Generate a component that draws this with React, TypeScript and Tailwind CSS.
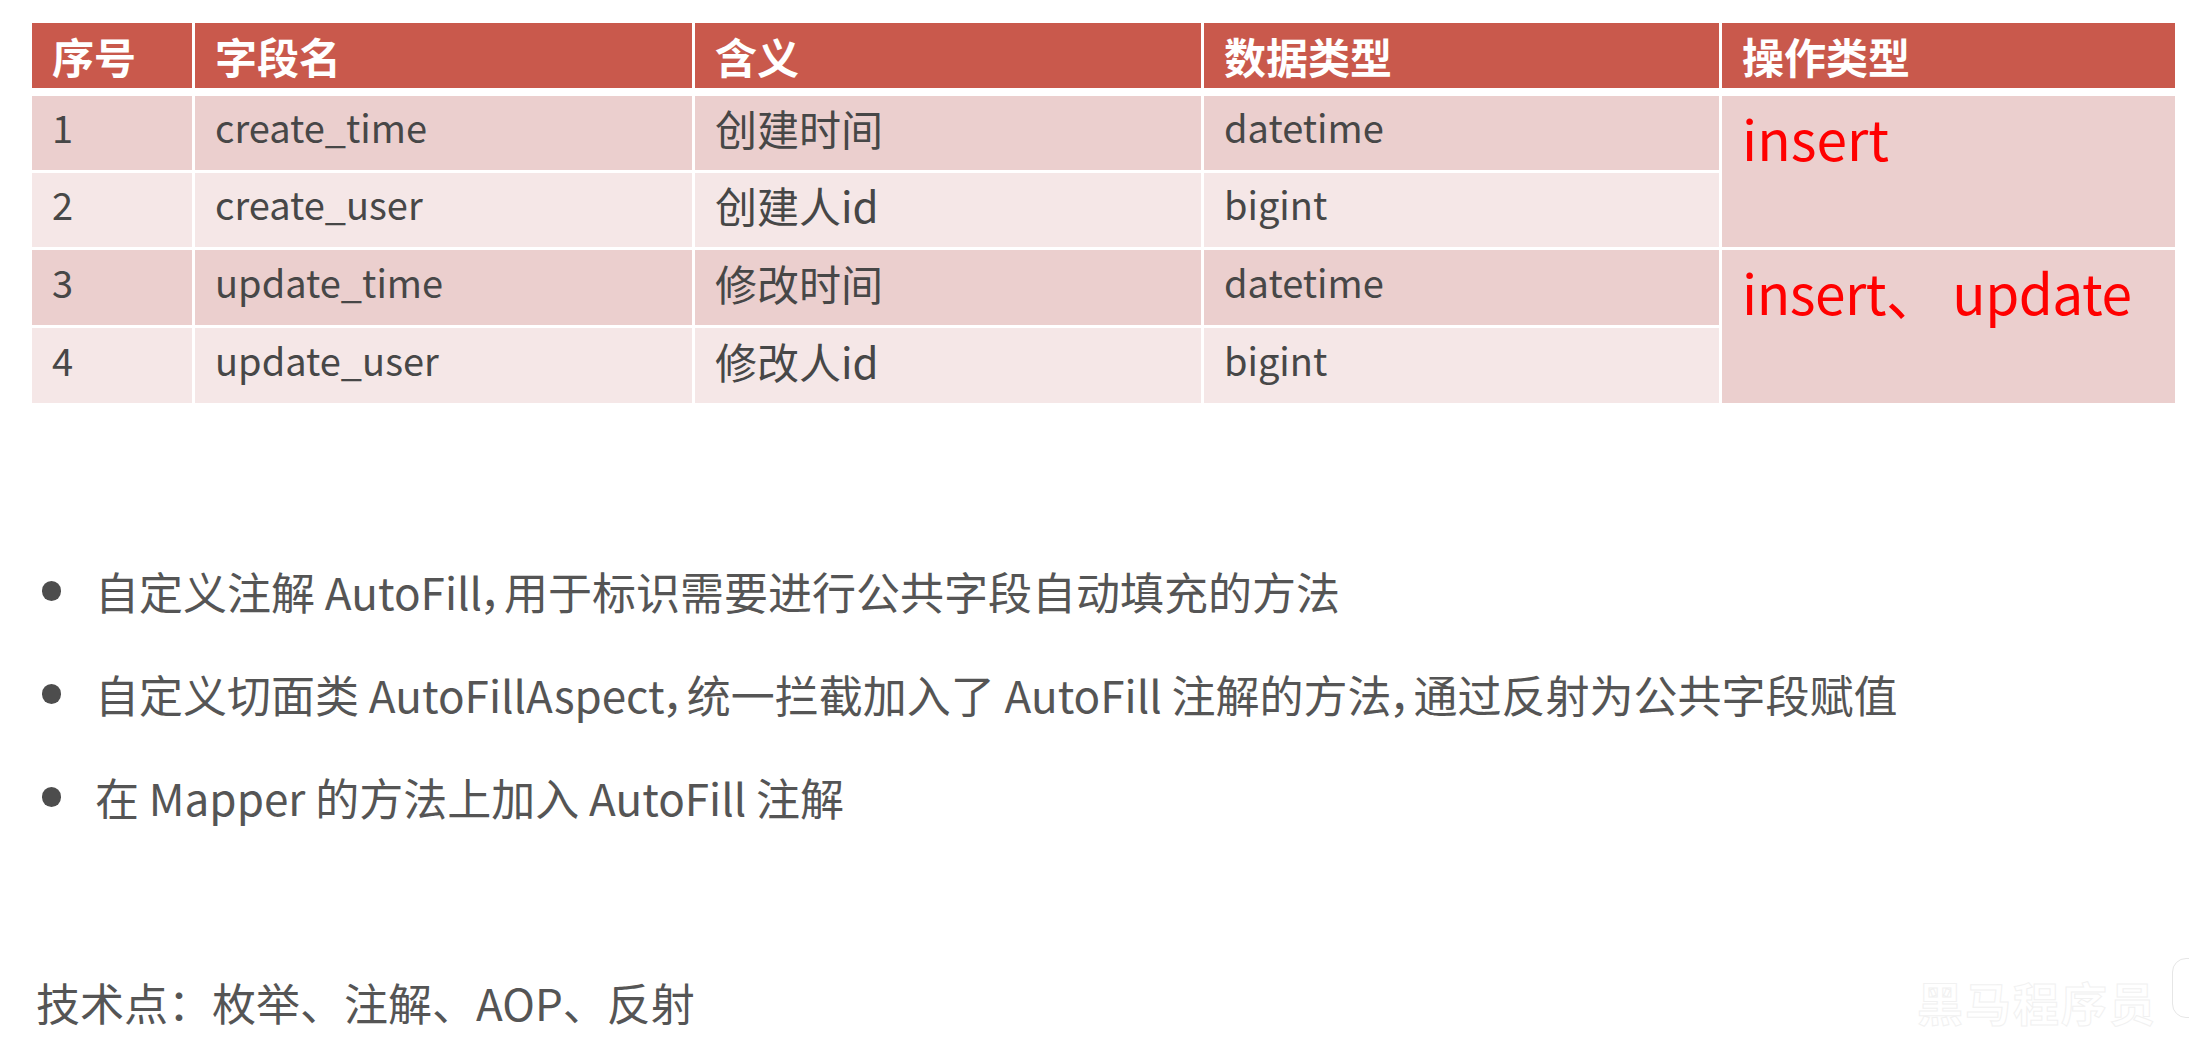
import React from 'react';

interface FieldRow {
  no: string;
  name: string;
  meaning: string;
  type: string;
}

const rows: FieldRow[] = [
  { no: '1', name: 'create_time', meaning: '创建时间', type: 'datetime' },
  { no: '2', name: 'create_user', meaning: '创建人id', type: 'bigint' },
  { no: '3', name: 'update_time', meaning: '修改时间', type: 'datetime' },
  { no: '4', name: 'update_user', meaning: '修改人id', type: 'bigint' },
];

const headers = ['序号', '字段名', '含义', '数据类型', '操作类型'];

const bullets = [
  '自定义注解 AutoFill，用于标识需要进行公共字段自动填充的方法',
  '自定义切面类 AutoFillAspect，统一拦截加入了 AutoFill 注解的方法，通过反射为公共字段赋值',
  '在 Mapper 的方法上加入 AutoFill 注解',
];

const App: React.FC = () => {
  return (
    <div className="relative w-[2189px] h-[1040px] overflow-hidden bg-white font-['Noto_Sans_CJK_SC',sans-serif]">
      {/* Table */}
      <div className="ml-[32px] mt-[23px] w-[2143px]">
        {/* Header */}
        <div className="grid grid-cols-[160px_497px_506px_515px_453px] gap-x-[3px] h-[65px]">
          {headers.map((h) => (
            <div key={h} className="bg-[#c9594c] flex items-center pl-[20px] text-white font-bold text-[42px] leading-none">
              {h}
            </div>
          ))}
        </div>

        {/* Body */}
        <div className="mt-[8px] grid grid-cols-[160px_497px_506px_515px_453px] grid-rows-[74px_74px_75px_75px] gap-x-[3px] gap-y-[3px]">
          {rows.map((r, i) => {
            const bg = i % 2 === 0 ? 'bg-[#ebcfce]' : 'bg-[#f5e7e7]';
            const cell = `${bg} flex items-center pl-[20px] leading-none text-[#474747]`;
            return (
              <React.Fragment key={r.no}>
                <div className={`${cell} text-[38px] pb-[12px]`} style={{ gridRow: i + 1, gridColumn: 1 }}>{r.no}</div>
                <div className={`${cell} text-[38px] pb-[12px]`} style={{ gridRow: i + 1, gridColumn: 2 }}>{r.name}</div>
                <div className={`${cell} text-[42px] pb-[10px]`} style={{ gridRow: i + 1, gridColumn: 3 }}>{r.meaning}</div>
                <div className={`${cell} text-[38px] pb-[12px]`} style={{ gridRow: i + 1, gridColumn: 4 }}>{r.type}</div>
              </React.Fragment>
            );
          })}
          <div className="col-start-5 row-start-1 row-span-2 bg-[#ebcfce] pl-[20px] pt-[14px] text-[55px] leading-none text-[#ff0000]">
            insert
          </div>
          <div className="col-start-5 row-start-3 row-span-2 bg-[#ebcfce] pl-[20px] pt-[14px] text-[55px] leading-none text-[#ff0000] whitespace-nowrap tracking-[-0.5px]">
            insert、 update
          </div>
        </div>
      </div>

      {/* Bullet points */}
      <ul className="mt-[166px] ml-[42px] flex flex-col gap-[59px] [font-feature-settings:'palt']">
        {bullets.map((b) => (
          <li key={b} className="flex items-center text-[44px] leading-none text-[#555555]">
            <span className="w-[19px] h-[20px] rounded-full bg-[#4d4d4d] mr-[34px] shrink-0" />
            <span>{b}</span>
          </li>
        ))}
      </ul>

      {/* Tech points */}
      <p className="mt-[161px] ml-[36px] text-[44px] leading-none text-[#555555]">
        技术点：枚举、注解、AOP、反射
      </p>

      {/* Watermark */}
      <div className="absolute left-[1917px] top-[978px] text-[46px] leading-none font-bold text-white [-webkit-text-stroke:1px_#f1f1f1] tracking-[2px]">
        黑马程序员
      </div>
      <div className="absolute left-[2172px] top-[958px] w-[40px] h-[60px] rounded-[14px] border border-[#e6e6e6] bg-white" />
    </div>
  );
};

export default App;
